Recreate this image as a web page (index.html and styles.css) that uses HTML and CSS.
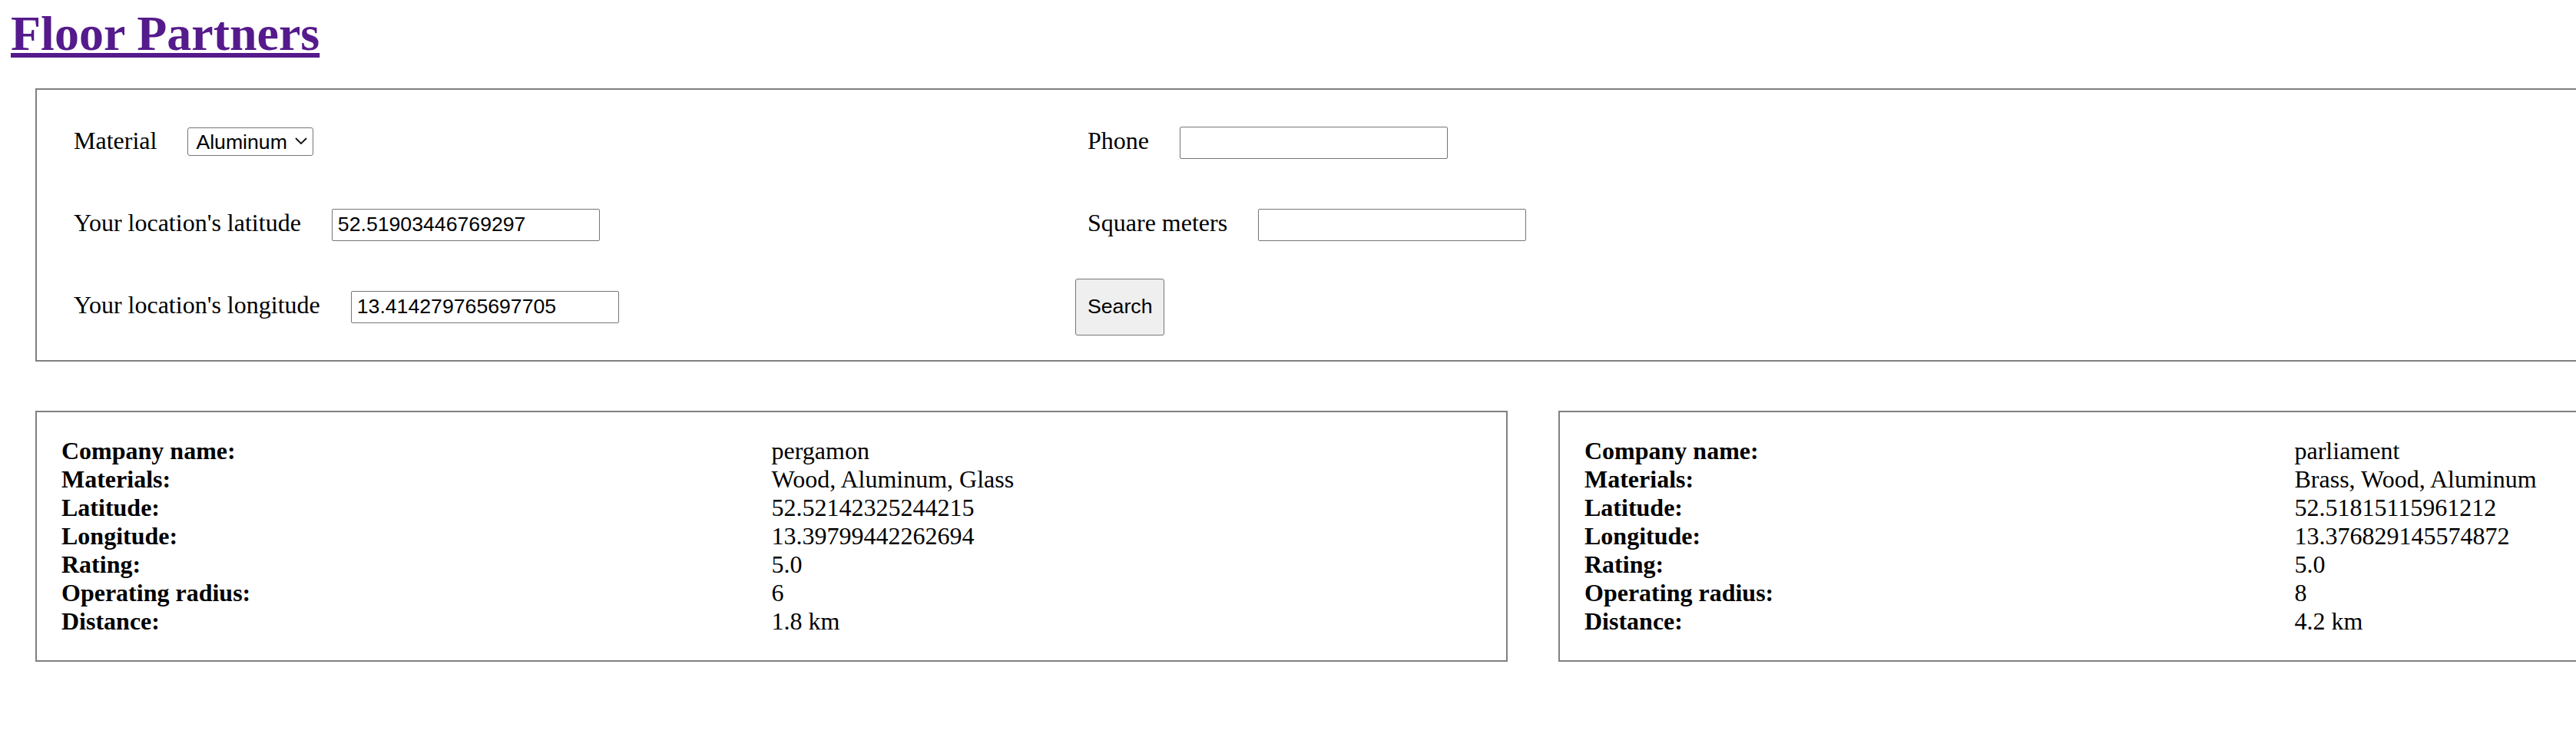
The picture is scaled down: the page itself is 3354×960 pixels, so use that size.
FILE: index.html
```html
<!DOCTYPE html>
<html lang="en">
<head>
<meta charset="utf-8">
<title>Floor Partners</title>
<link rel="stylesheet" href="styles.css">
</head>
<body>
<h1 class="title"><a class="title-link" href="#">Floor Partners</a></h1>

<form class="search">
  <div class="field">
    <label class="field-label" for="material">Material</label>
    <span class="select-wrap">
      <select id="material" class="select">
        <option selected>Aluminum</option>
        <option>Wood</option>
        <option>Glass</option>
        <option>Brass</option>
      </select>
      <svg class="chevron" width="16" height="9" viewBox="0 0 16 9" aria-hidden="true"><polyline points="1,1 8,8 15,1" fill="none" stroke="#111" stroke-width="1.8"/></svg>
    </span>
  </div>
  <div class="field">
    <label class="field-label" for="phone">Phone</label>
    <input id="phone" class="text-input" type="text" value="">
  </div>
  <div class="field">
    <label class="field-label" for="lat">Your location's latitude</label>
    <input id="lat" class="text-input" type="text" value="52.51903446769297">
  </div>
  <div class="field">
    <label class="field-label" for="sqm">Square meters</label>
    <input id="sqm" class="text-input" type="text" value="">
  </div>
  <div class="field">
    <label class="field-label" for="lng">Your location's longitude</label>
    <input id="lng" class="text-input" type="text" value="13.414279765697705">
  </div>
  <button class="search-btn" type="submit">Search</button>
</form>

<div class="results">
  <dl class="card">
    <dt class="card-key">Company name:</dt><dd class="card-val">pergamon</dd>
    <dt class="card-key">Materials:</dt><dd class="card-val">Wood, Aluminum, Glass</dd>
    <dt class="card-key">Latitude:</dt><dd class="card-val">52.52142325244215</dd>
    <dt class="card-key">Longitude:</dt><dd class="card-val">13.39799442262694</dd>
    <dt class="card-key">Rating:</dt><dd class="card-val">5.0</dd>
    <dt class="card-key">Operating radius:</dt><dd class="card-val">6</dd>
    <dt class="card-key">Distance:</dt><dd class="card-val">1.8 km</dd>
  </dl>
  <dl class="card">
    <dt class="card-key">Company name:</dt><dd class="card-val">parliament</dd>
    <dt class="card-key">Materials:</dt><dd class="card-val">Brass, Wood, Aluminum</dd>
    <dt class="card-key">Latitude:</dt><dd class="card-val">52.51815115961212</dd>
    <dt class="card-key">Longitude:</dt><dd class="card-val">13.376829145574872</dd>
    <dt class="card-key">Rating:</dt><dd class="card-val">5.0</dd>
    <dt class="card-key">Operating radius:</dt><dd class="card-val">8</dd>
    <dt class="card-key">Distance:</dt><dd class="card-val">4.2 km</dd>
  </dl>
</div>
</body>
</html>
```

FILE: styles.css
```css
html {
  overflow-x: hidden;
}

body {
  margin: 0;
  padding: 7px 0 40px 14px;
  font-family: "Liberation Serif", "Times New Roman", serif;
  font-size: 32px;
  color: #000;
  background: #fff;
}

.title {
  margin: 0;
  font-size: 64px;
  font-weight: bold;
  line-height: normal;
}

.title-link {
  color: #551a8b;
  text-decoration: underline;
}

.search {
  box-sizing: border-box;
  width: 3400px;
  margin: 34px 0 0 32px;
  padding: 31.5px 32px 32px;
  border: 2px solid #808080;
  display: grid;
  grid-template-columns: 1320px 1fr;
  row-gap: 33px;
}

.field {
  display: flex;
  align-items: baseline;
  padding: 16px;
}

.field-label {
  margin-right: 40px;
  white-space: nowrap;
}

.select-wrap {
  position: relative;
  display: inline-block;
}

.select {
  box-sizing: border-box;
  width: 164px;
  height: 37px;
  margin: 0;
  padding: 0 30px 0 10px;
  border: 1px solid #767676;
  border-radius: 3px;
  background: #fff;
  color: #000;
  font-family: "Liberation Sans", Arial, sans-serif;
  font-size: 26.67px;
  -webkit-appearance: none;
  appearance: none;
}

.chevron {
  position: absolute;
  left: 140px;
  top: 14px;
  pointer-events: none;
}

.text-input {
  box-sizing: border-box;
  width: 349px;
  height: 42px;
  margin: 0;
  padding: 0 7px;
  border: 1px solid #767676;
  border-radius: 2px;
  background: #fff;
  color: #000;
  font-family: "Liberation Sans", Arial, sans-serif;
  font-size: 26.67px;
}

.search-btn {
  justify-self: start;
  margin: 0;
  padding: 0 15px;
  border: 1px solid #767676;
  border-radius: 3px;
  background: #efefef;
  color: #000;
  font-family: "Liberation Sans", Arial, sans-serif;
  font-size: 26.67px;
}

.results {
  display: flex;
  gap: 66px;
  margin: 64.5px 0 0 32px;
}

.card {
  box-sizing: border-box;
  flex: 0 0 1917px;
  width: 1917px;
  margin: 0;
  padding: 32px;
  border: 2px solid #808080;
  display: grid;
  grid-template-columns: 1fr 1fr;
}

.card-key {
  font-weight: bold;
}

.card-val {
  margin: 0;
}
```
